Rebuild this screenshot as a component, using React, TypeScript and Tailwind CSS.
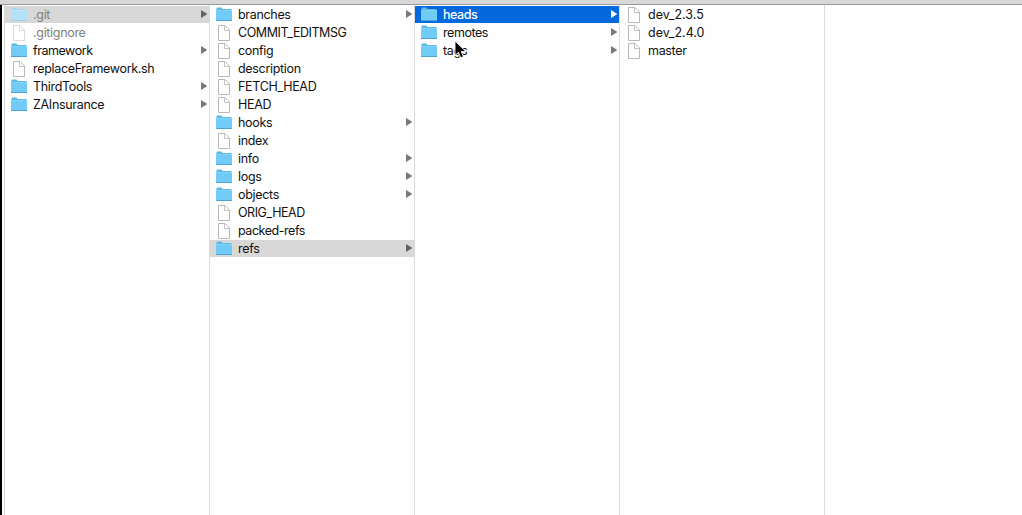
type Entry = { name: string; folder?: boolean; hidden?: boolean; state?: "path" | "active"; tracking?: string };

const tight = "tracking-[-0.45px]";
const plain = "tracking-normal";

const columns: Entry[][] = [
  [
    { name: ".git", folder: true, hidden: true, state: "path" },
    { name: ".gitignore", hidden: true },
    { name: "framework", folder: true, tracking: tight },
    { name: "replaceFramework.sh" },
    { name: "ThirdTools", folder: true },
    { name: "ZAInsurance", folder: true },
  ],
  [
    { name: "branches", folder: true },
    { name: "COMMIT_EDITMSG", tracking: tight },
    { name: "config" },
    { name: "description" },
    { name: "FETCH_HEAD" },
    { name: "HEAD" },
    { name: "hooks", folder: true },
    { name: "index" },
    { name: "info", folder: true },
    { name: "logs", folder: true },
    { name: "objects", folder: true },
    { name: "ORIG_HEAD", tracking: tight },
    { name: "packed-refs", tracking: tight },
    { name: "refs", folder: true, state: "path" },
  ],
  [
    { name: "heads", folder: true, state: "active", tracking: "tracking-[-0.45px]" },
    { name: "remotes", folder: true, tracking: tight },
    { name: "tags", folder: true },
  ],
  [{ name: "dev_2.3.5", tracking: plain }, { name: "dev_2.4.0", tracking: plain }, { name: "master" }],
];

function FolderIcon({ faded }: { faded?: boolean }) {
  return (
    <svg width="16" height="16" viewBox="0 0 16 16">
      <path d="M.5 3V1.2Q.5.5 1.2.5h4.2L6.6 2H15q.5 0 .5.6V4H.5z" fill={faded ? "#a5d8ef" : "#5cb9e6"} />
      <path d="M0 3h16v11H0z" fill={faded ? "#b3e2f8" : "#70cbf7"} />
      <path d="M0 3h16v1H0z" fill={faded ? "#bde7fa" : "#83d5fa"} />
      <path d="M0 13h16v1H0z" fill={faded ? "#a0d0e8" : "#4ba6d6"} />
    </svg>
  );
}

function FileIcon({ faded }: { faded?: boolean }) {
  const stroke = faded ? "#dadada" : "#b9b9b9";
  return (
    <svg width="16" height="16" viewBox="0 0 16 16">
      <path d="M2.5.5h6.5l4.5 4.5v10.5h-11z" fill="#fff" stroke={stroke} />
      <path d="M8.5.5v5h5" fill="none" stroke={stroke} strokeWidth="0.9" />
    </svg>
  );
}

function Row({ entry }: { entry: Entry }) {
  const active = entry.state === "active";
  const bg = active ? "bg-[#0469dc]" : entry.state === "path" ? "bg-[#d8d8d8]" : "";
  const text = active ? "text-white font-medium" : entry.hidden ? "text-[#808080]" : "text-[#111]";
  const arrow = active ? "#fff" : entry.state === "path" ? "#646464" : "#787878";
  return (
    <div className={`mb-px flex h-[17px] items-center pl-1.5 ${bg}`}>
      <span className="h-4 w-4 shrink-0">
        {entry.folder ? <FolderIcon faded={entry.hidden} /> : <FileIcon faded={entry.hidden} />}
      </span>
      <span
        className={`ml-1.5 flex-1 text-[12.5px] leading-[17px] whitespace-nowrap ${entry.tracking ?? "tracking-[-0.32px]"} ${text}`}
      >
        {entry.name}
      </span>
      {entry.folder && (
        <svg className="mr-0.5 mb-px" width="6" height="8" viewBox="0 0 6 8">
          <path d="M0 0L6.5 4L0 8z" fill={arrow} />
        </svg>
      )}
    </div>
  );
}

export default function App() {
  return (
    <div className="relative flex h-[515px] w-[1022px] flex-col overflow-hidden bg-[#fefefe] font-['Inter',sans-serif]">
      <div className="h-[5px] shrink-0 border-b border-[#999] bg-[#d8d8d8]" />
      <div className="flex min-h-0 flex-1">
        <div className="w-0.5 bg-black" />
        <div className="w-[3px] border-r border-[#d8d8d8] bg-white" />
        {columns.map((entries, i) => (
          <div key={i} className="w-[205px] border-r border-[#dcdcdc] pt-px">
            {entries.map((entry) => (
              <Row key={entry.name} entry={entry} />
            ))}
          </div>
        ))}
      </div>
      <svg className="absolute top-[40px] left-[454px]" width="14" height="20" viewBox="0 0 14 20">
        <path d="M1 1v14.5l3.5-3.2L6.7 17.8l2.8-1.2-2.3-5.2h4.6z" fill="#000" stroke="#fff" strokeWidth="0.9" />
      </svg>
    </div>
  );
}
